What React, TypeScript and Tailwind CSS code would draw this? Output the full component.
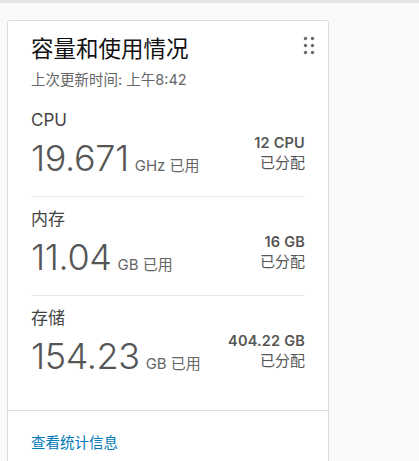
import React from "react";

const font = { fontFamily: "Inter, 'Noto Sans CJK SC', sans-serif" };

function Row({ label, value, unit, total, last }: { label: string; value: string; unit: string; total: string; last?: boolean }) {
  return (
    <div className={`h-[99px] pt-[10px] ${last ? "" : "border-b border-[#e8e8e8]"}`}>
      <div className="text-[17px] leading-[24px] text-[#454545]">{label}</div>
      <div className="flex items-start justify-between mt-[4px]">
        <div className="flex items-baseline h-[44px]">
          <span className="text-[36px] leading-[44px] font-light text-[#565656] tracking-[-0.4px]">{value}</span>
          <span className="ml-[6px] text-[15px] text-[#666]">{unit} 已用</span>
        </div>
        <div className="text-right text-[#565656] -mt-[3px]">
          <div className="text-[14.5px] font-semibold leading-[20px] tracking-[0.2px]">{total}</div>
          <div className="text-[15px] leading-[20px]">已分配</div>
        </div>
      </div>
    </div>
  );
}

export default function App() {
  return (
    <div className="w-[419px] h-[461px] bg-[#fafafa] overflow-hidden" style={font}>
      <div className="h-[3px] bg-[#e6e6e6]" />
      <div className="ml-[7px] mt-[17px] w-[322px] bg-white border border-[#dcdcdc] rounded-[3px] relative">
        <svg className="absolute left-[295px] top-[15px]" width="12" height="19" viewBox="0 0 12 19">
          {[0, 1, 2].map((r) =>
            [0, 1].map((c) => (
              <circle key={`${r}-${c}`} cx={2.5 + c * 7} cy={2.5 + r * 7} r="1.7" fill="#6a6a6a" />
            ))
          )}
        </svg>
        <div className="h-[389px] px-[23px] pt-[12px]">
          <div className="text-[22.5px] leading-[32px] text-[#111]">容量和使用情况</div>
          <div className="text-[14.5px] leading-[20px] text-[#666] mt-[5px]">上次更新时间: 上午8:42</div>
          <div className="mt-[8px]">
            <Row label="CPU" value="19.671" unit="GHz" total="12 CPU" />
            <Row label="内存" value="11.04" unit="GB" total="16 GB" />
            <Row label="存储" value="154.23" unit="GB" total="404.22 GB" last />
          </div>
        </div>
        <div className="border-t border-[#dcdcdc] px-[23px] pt-[19px] h-[80px]">
          <a className="text-[14.5px] leading-[20px] text-[#0079b8]">查看统计信息</a>
        </div>
      </div>
    </div>
  );
}
